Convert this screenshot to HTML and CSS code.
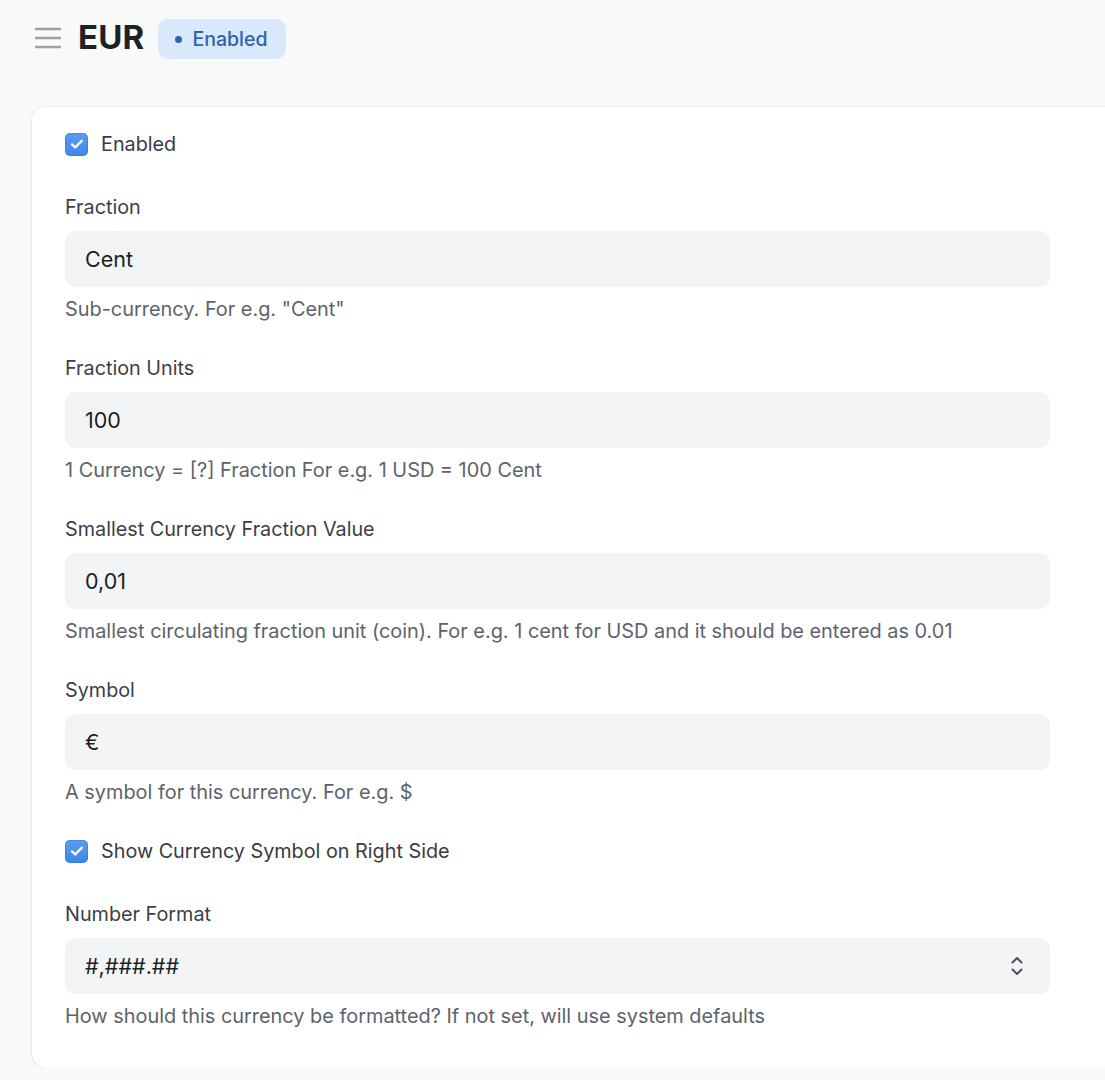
FILE: index.html
```html
<!DOCTYPE html>
<html>
<head>
<meta charset="utf-8">
<link rel="stylesheet" href="styles.css">
</head>
<body>
<header class="topbar">
  <svg class="menu-icon" width="26" height="22" viewBox="0 0 26 22">
    <path d="M1 2h24M1 11h24M1 20h24" stroke="#9ca0a7" stroke-width="2.6" stroke-linecap="round" fill="none"/>
  </svg>
  <h1 class="title">EUR</h1>
  <span class="badge"><span class="badge-dot"></span>Enabled</span>
</header>
<main class="main">
  <section class="card">
    <label class="check-row">
      <span class="checkbox"><svg width="16" height="16" viewBox="0 0 16 16"><path d="M3 8.4l3.2 3 6.6-6.6" stroke="#fff" stroke-width="2.3" fill="none" stroke-linecap="round" stroke-linejoin="round"/></svg></span>
      <span class="check-label">Enabled</span>
    </label>
    <div class="field">
      <div class="label">Fraction</div>
      <div class="input">Cent</div>
      <div class="help">Sub-currency. For e.g. "Cent"</div>
    </div>
    <div class="field">
      <div class="label">Fraction Units</div>
      <div class="input">100</div>
      <div class="help">1 Currency = [?] Fraction For e.g. 1 USD = 100 Cent</div>
    </div>
    <div class="field">
      <div class="label">Smallest Currency Fraction Value</div>
      <div class="input">0,01</div>
      <div class="help">Smallest circulating fraction unit (coin). For e.g. 1 cent for USD and it should be entered as 0.01</div>
    </div>
    <div class="field">
      <div class="label">Symbol</div>
      <div class="input">€</div>
      <div class="help">A symbol for this currency. For e.g. $</div>
    </div>
    <label class="check-row">
      <span class="checkbox"><svg width="16" height="16" viewBox="0 0 16 16"><path d="M3 8.4l3.2 3 6.6-6.6" stroke="#fff" stroke-width="2.3" fill="none" stroke-linecap="round" stroke-linejoin="round"/></svg></span>
      <span class="check-label">Show Currency Symbol on Right Side</span>
    </label>
    <div class="field">
      <div class="label">Number Format</div>
      <div class="input select">
        <span>#,###.##</span>
        <svg class="chevrons" width="14" height="24" viewBox="0 0 14 24">
          <path d="M2.5 8.5L7 4l4.5 4.5M2.5 15.5L7 20l4.5-4.5" stroke="#4b5058" stroke-width="2" fill="none" stroke-linecap="round" stroke-linejoin="round"/>
        </svg>
      </div>
      <div class="help">How should this currency be formatted? If not set, will use system defaults</div>
    </div>
  </section>
</main>
</body>
</html>
```

FILE: styles.css
```css
html, body {
  margin: 0;
  padding: 0;
}
body {
  background: #f8f9f9;
  font-family: Inter, "Noto Sans", "Liberation Sans", sans-serif;
  color: #1f2328;
  overflow: hidden;
}
.topbar {
  display: flex;
  align-items: center;
  height: 40px;
  padding: 19px 0 0 35px;
}
.menu-icon {
  display: block;
  margin-right: 17px;
  margin-top: -2px;
}
.title {
  margin: -4px 14px 0 0;
  font-size: 33px;
  font-weight: 700;
  color: #1e2227;
  letter-spacing: 0.2px;
  line-height: 40px;
}
.badge {
  display: inline-flex;
  align-items: center;
  height: 40px;
  padding: 0 18px 0 17px;
  border-radius: 10px;
  background: #d9e8fb;
  color: #2f62ad;
  font-size: 19.5px;
  font-weight: 500;
  box-sizing: border-box;
}
.badge-dot {
  width: 7px;
  height: 7px;
  border-radius: 50%;
  background: #2f62ad;
  margin-right: 10px;
}
.main {
  padding: 48px 0 0 32px;
}
.card {
  width: 1100px;
  background: #fff;
  border-radius: 14px;
  box-shadow: 0 0 0 1px rgba(0,0,0,0.035), 0 1px 4px rgba(0,0,0,0.06);
  padding: 25px 33px 39px;
  box-sizing: border-box;
  display: flex;
  flex-direction: column;
  gap: 35px;
}
.check-row {
  display: flex;
  align-items: center;
  height: 24px;
  margin-bottom: 4px;
}
.checkbox {
  width: 23px;
  height: 23px;
  border-radius: 5px;
  background: linear-gradient(#5a9cf0, #3f87e6);
  box-shadow: inset 0 0 0 1px rgba(40,100,200,0.35);
  display: flex;
  align-items: center;
  justify-content: center;
  margin-right: 13px;
}
.checkbox svg {
  display: block;
}
.check-label {
  font-size: 19.8px;
  color: #383c42;
  line-height: 24px;
}
.field {
  display: flex;
  flex-direction: column;
  width: 985px;
}
.label {
  font-size: 19.8px;
  line-height: 24px;
  color: #3b3f45;
  margin-bottom: 12px;
}
.input {
  height: 56px;
  border-radius: 10px;
  background: #f3f4f5;
  padding: 0 20px;
  display: flex;
  align-items: center;
  font-size: 21.5px;
  color: #1c1f23;
  box-sizing: border-box;
}
.select {
  justify-content: space-between;
  padding-right: 26px;
}
.chevrons {
  display: block;
}
.help {
  margin-top: 10px;
  font-size: 19.9px;
  line-height: 24px;
  color: #5d636c;
}
```
